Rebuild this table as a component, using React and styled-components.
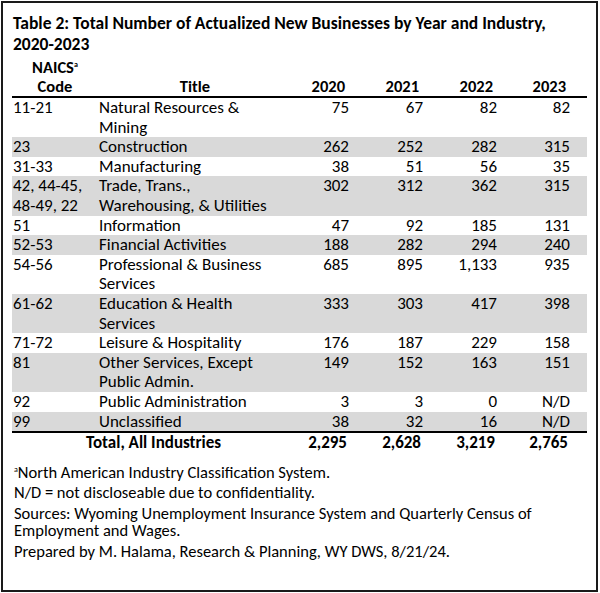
import React from "react";
import styled, { createGlobalStyle } from "styled-components";

const GlobalStyle = createGlobalStyle`
  html, body {
    margin: 0;
    padding: 0;
    background: #fff;
  }
  body {
    font-family: Carlito, Lato, "Liberation Sans", sans-serif;
    color: #000;
  }
`;

const Frame = styled.div`
  box-sizing: border-box;
  margin: 1px;
  width: 597px;
  height: 591px;
  border: 2px solid #1a1a1a;
  padding: 10px 9px 0 9px;
`;

const Heading = styled.h1`
  margin: 0 0 4px 1px;
  font-size: 17.5px;
  line-height: 20.5px;
  font-weight: 700;
`;

const NoBreak = styled.span`
  white-space: nowrap;
`;

const Table = styled.table`
  width: 575px;
  border-collapse: collapse;
  table-layout: fixed;
  font-size: 17px;
  line-height: 19.6px;
`;

const HeadCell = styled.th`
  font-weight: 700;
  font-size: 16.5px;
  line-height: 19px;
  vertical-align: bottom;
  text-align: ${(p) => p.$align || "center"};
  padding: 0 ${(p) => (p.$align === "right" ? "21px" : "0")} 0 0;
  border-bottom: 2px solid #000;
`;

const Sup = styled.sup`
  font-size: 8px;
  line-height: 0;
  vertical-align: 6px;
`;

const Row = styled.tr`
  background: ${(p) => (p.$shaded ? "#d9d9d9" : "transparent")};
`;

const Cell = styled.td`
  padding: 0 0 0 1px;
  vertical-align: top;
  white-space: pre-line;
`;

const Num = styled.td`
  padding: 0 17px 0 0;
  text-align: right;
  vertical-align: top;
`;

const TotalRow = styled.tr`
  font-weight: 700;
  border-top: 2px solid #000;
`;

const TotalLabel = styled.td`
  padding: 0 0 0 74px;
`;

const TotalNum = styled.td`
  padding: 0 19px 0 0;
  text-align: right;
`;

const Notes = styled.div`
  margin-top: 11px;
  padding-left: 2px;
  font-size: 16.5px;
  line-height: 17.5px;
`;

const Note = styled.p`
  margin: 0 0 3px 0;
`;

const rows = [
  ["11-21", "Natural Resources &\nMining", "75", "67", "82", "82"],
  ["23", "Construction", "262", "252", "282", "315"],
  ["31-33", "Manufacturing", "38", "51", "56", "35"],
  ["42, 44-45,\n48-49, 22", "Trade, Trans.,\nWarehousing, & Utilities", "302", "312", "362", "315"],
  ["51", "Information", "47", "92", "185", "131"],
  ["52-53", "Financial Activities", "188", "282", "294", "240"],
  ["54-56", "Professional & Business\nServices", "685", "895", "1,133", "935"],
  ["61-62", "Education & Health\nServices", "333", "303", "417", "398"],
  ["71-72", "Leisure & Hospitality", "176", "187", "229", "158"],
  ["81", "Other Services, Except\nPublic Admin.", "149", "152", "163", "151"],
  ["92", "Public Administration", "3", "3", "0", "N/D"],
  ["99", "Unclassified", "38", "32", "16", "N/D"],
];

export default function App() {
  return (
    <>
      <GlobalStyle />
      <Frame>
        <Heading>
          Table 2: Total Number of Actualized New Businesses by Year and Industry,{" "}
          <NoBreak>2020-2023</NoBreak>
        </Heading>
        <Table>
          <colgroup>
            <col style={{ width: 86 }} />
            <col style={{ width: 194 }} />
            <col style={{ width: 74 }} />
            <col style={{ width: 74 }} />
            <col style={{ width: 74 }} />
            <col style={{ width: 73 }} />
          </colgroup>
          <thead>
            <tr>
              <HeadCell>
                NAICS<Sup>a</Sup>
                <br />
                Code
              </HeadCell>
              <HeadCell>Title</HeadCell>
              <HeadCell $align="right">2020</HeadCell>
              <HeadCell $align="right">2021</HeadCell>
              <HeadCell $align="right">2022</HeadCell>
              <HeadCell $align="right">2023</HeadCell>
            </tr>
          </thead>
          <tbody>
            {rows.map((r, i) => (
              <Row key={r[0]} $shaded={i % 2 === 1}>
                <Cell>{r[0]}</Cell>
                <Cell>{r[1]}</Cell>
                <Num>{r[2]}</Num>
                <Num>{r[3]}</Num>
                <Num>{r[4]}</Num>
                <Num>{r[5]}</Num>
              </Row>
            ))}
            <TotalRow>
              <TotalLabel colSpan={2}>Total, All Industries</TotalLabel>
              <TotalNum>2,295</TotalNum>
              <TotalNum>2,628</TotalNum>
              <TotalNum>3,219</TotalNum>
              <TotalNum>2,765</TotalNum>
            </TotalRow>
          </tbody>
        </Table>
        <Notes>
          <Note>
            <Sup>a</Sup>North American Industry Classification System.
          </Note>
          <Note>N/D = not discloseable due to confidentiality.</Note>
          <Note>
            Sources: Wyoming Unemployment Insurance System and Quarterly Census of Employment and
            Wages.
          </Note>
          <Note>Prepared by M. Halama, Research &amp; Planning, WY DWS, 8/21/24.</Note>
        </Notes>
      </Frame>
    </>
  );
}
